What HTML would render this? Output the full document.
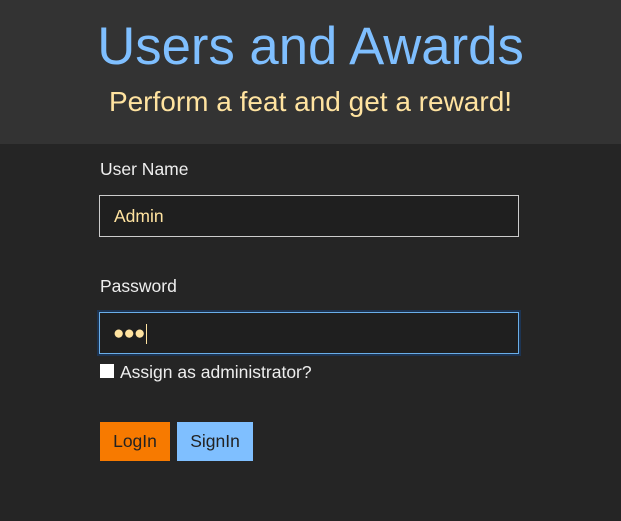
<!DOCTYPE html>
<html><head><style>
html,body{margin:0;padding:0;width:621px;height:521px;background:#252525;font-family:"Liberation Sans",sans-serif;overflow:hidden}
.hdr{position:absolute;left:0;top:0;width:621px;height:144px;background:#333}
.t{position:absolute;left:0;width:621px;text-align:center;white-space:nowrap}
.lbl{position:absolute;left:100px;color:#eee;font-size:17.5px}
.inp{position:absolute;left:99px;width:418px;height:40px;border:1px solid #ccc;background:#1f1f1f;color:#ffe3a0;font-size:17.5px;line-height:40px;box-sizing:content-box}
.btn{position:absolute;top:422px;height:39px;line-height:39px;text-align:center;font-size:17.5px;color:#222}
</style></head><body>
<div class="hdr"></div>
<div class="t" style="top:19px;font-size:52.7px;color:#7fbfff;line-height:56px">Users and Awards</div>
<div class="t" style="top:86px;font-size:28px;color:#ffe3a0;line-height:32px">Perform a feat and get a reward!</div>
<div class="lbl" style="top:159px">User Name</div>
<div class="inp" style="top:195px"><span style="margin-left:14px">Admin</span></div>
<div class="lbl" style="top:276px">Password</div>
<div style="position:absolute;left:97px;top:310px;width:424px;height:46px;background:#1d3452"></div>
<div class="inp" style="top:312px;border-color:#6aaee8"><span style="margin-left:13px;letter-spacing:-1px;font-size:19px">●●●</span><span style="display:inline-block;width:1px;height:20px;background:#ffe3a0;vertical-align:middle;margin-left:2px"></span></div>
<div style="position:absolute;left:100px;top:364px;width:14px;height:14px;background:#fff"></div>
<div class="lbl" style="left:120px;top:362px">Assign as administrator?</div>
<div class="btn" style="left:100px;width:70px;background:#f77a00">LogIn</div>
<div class="btn" style="left:177px;width:76px;background:#7fbfff">SignIn</div>
</body></html>
